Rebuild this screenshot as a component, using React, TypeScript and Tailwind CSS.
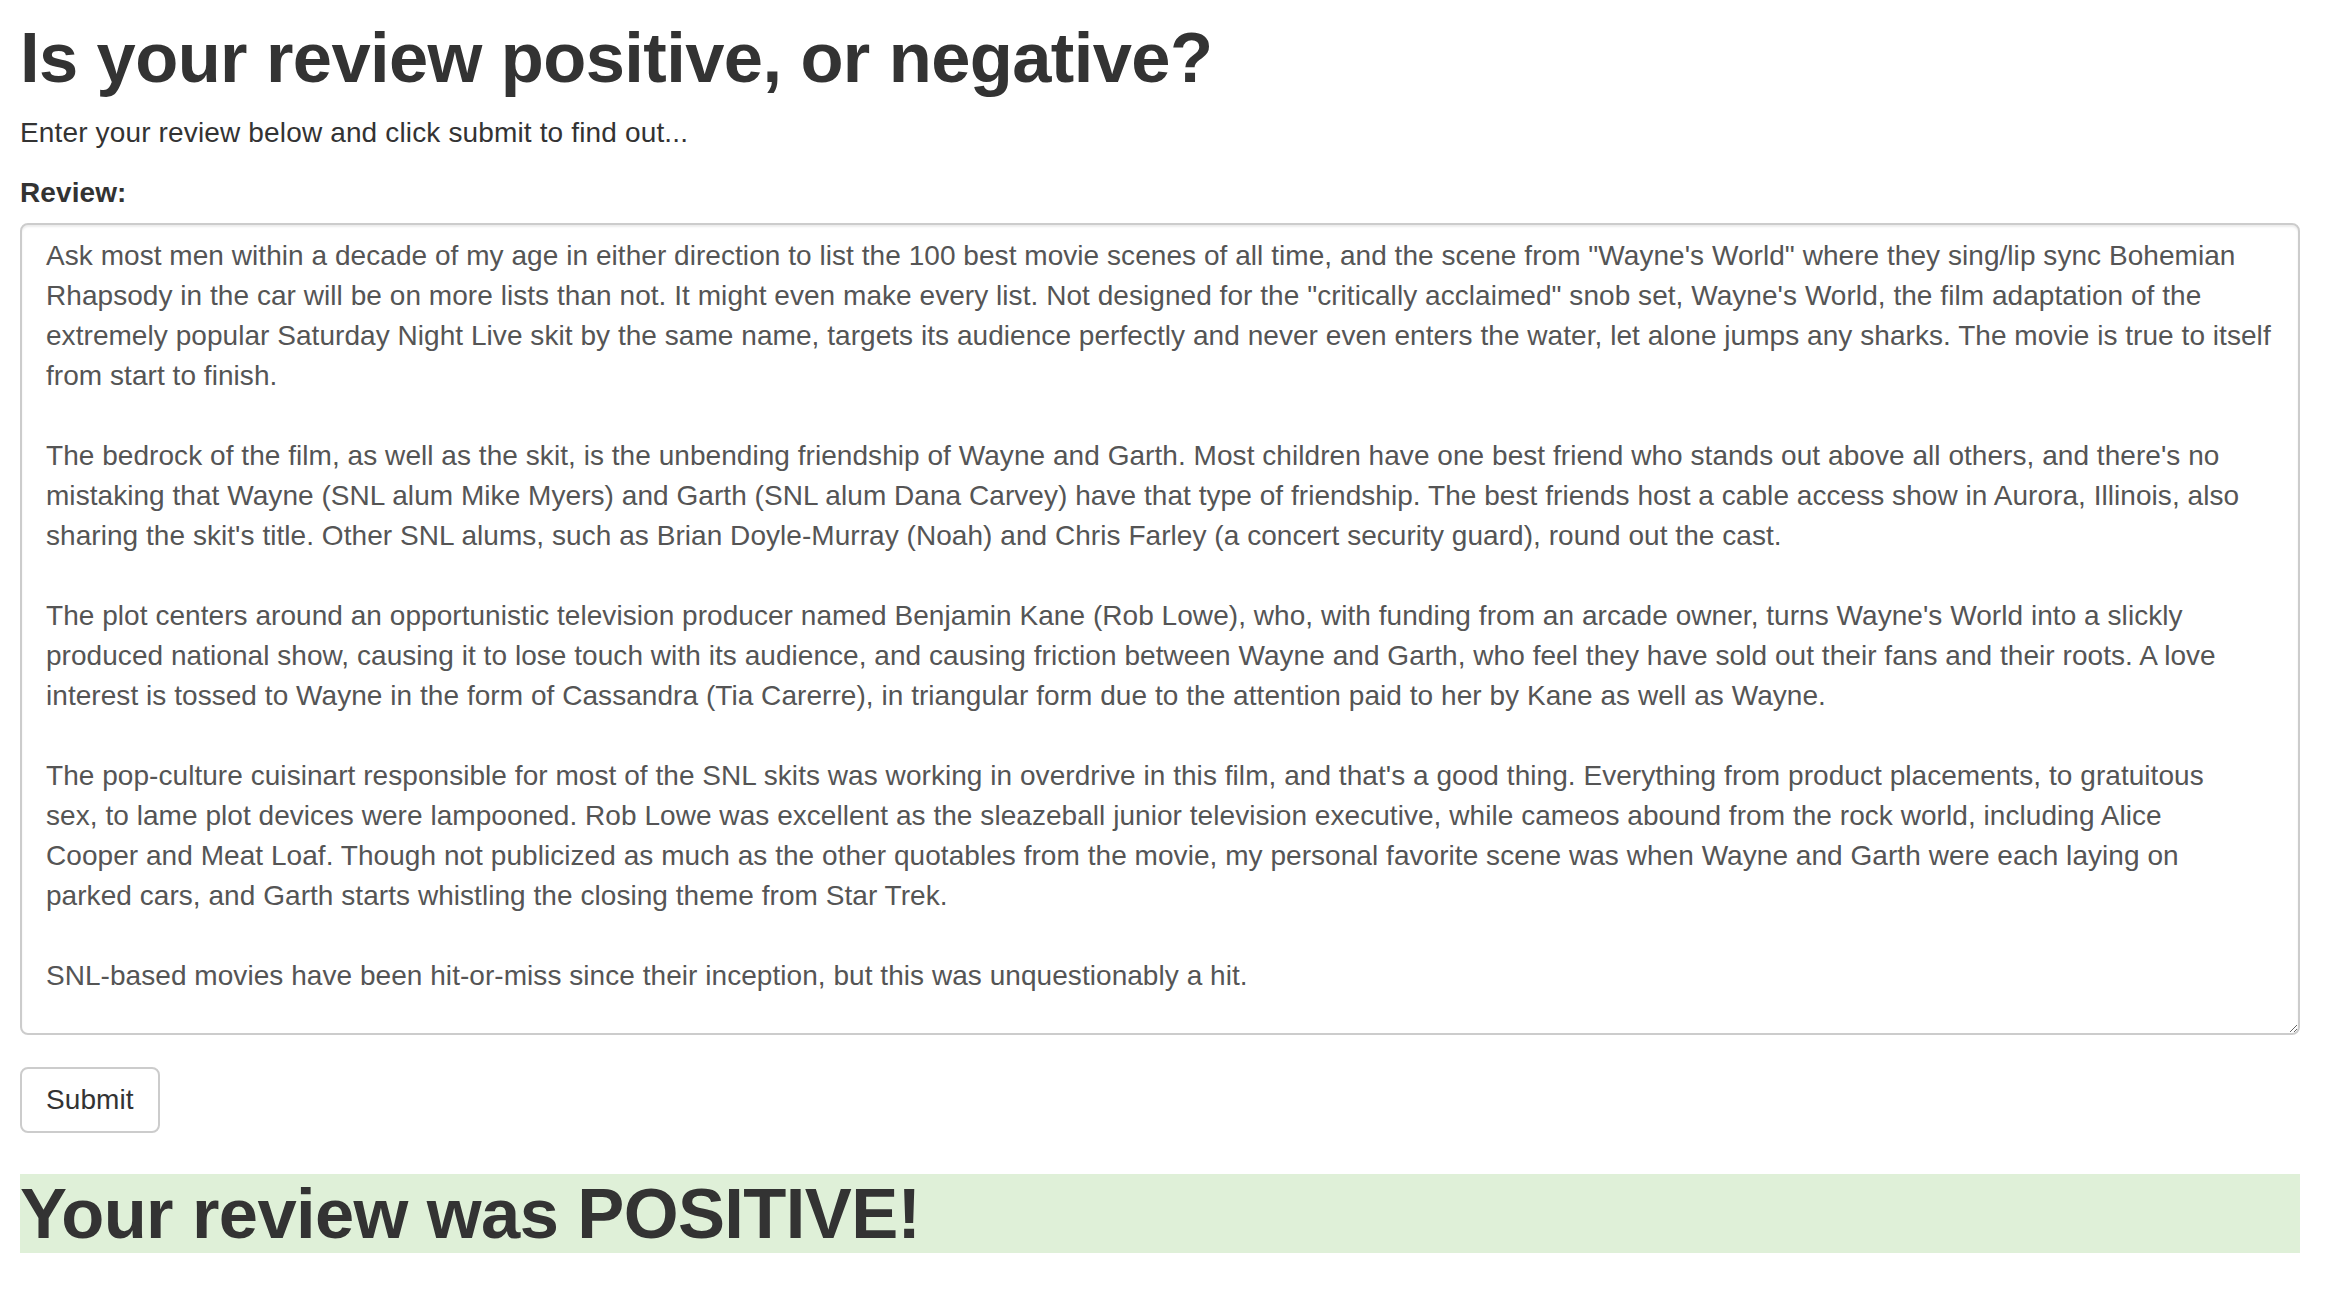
import React from 'react';

const review = [
  'Ask most men within a decade of my age in either direction to list the 100 best movie scenes of all time, and the scene from "Wayne\'s World" where they sing/lip sync Bohemian',
  'Rhapsody in the car will be on more lists than not. It might even make every list. Not designed for the "critically acclaimed" snob set, Wayne\'s World, the film adaptation of the',
  'extremely popular Saturday Night Live skit by the same name, targets its audience perfectly and never even enters the water, let alone jumps any sharks. The movie is true to itself',
  'from start to finish.',
  '',
  "The bedrock of the film, as well as the skit, is the unbending friendship of Wayne and Garth. Most children have one best friend who stands out above all others, and there's no",
  'mistaking that Wayne (SNL alum Mike Myers) and Garth (SNL alum Dana Carvey) have that type of friendship. The best friends host a cable access show in Aurora, Illinois, also',
  "sharing the skit's title. Other SNL alums, such as Brian Doyle-Murray (Noah) and Chris Farley (a concert security guard), round out the cast.",
  '',
  "The plot centers around an opportunistic television producer named Benjamin Kane (Rob Lowe), who, with funding from an arcade owner, turns Wayne's World into a slickly",
  'produced national show, causing it to lose touch with its audience, and causing friction between Wayne and Garth, who feel they have sold out their fans and their roots. A love',
  'interest is tossed to Wayne in the form of Cassandra (Tia Carerre), in triangular form due to the attention paid to her by Kane as well as Wayne.',
  '',
  "The pop-culture cuisinart responsible for most of the SNL skits was working in overdrive in this film, and that's a good thing. Everything from product placements, to gratuitous",
  'sex, to lame plot devices were lampooned. Rob Lowe was excellent as the sleazeball junior television executive, while cameos abound from the rock world, including Alice',
  'Cooper and Meat Loaf. Though not publicized as much as the other quotables from the movie, my personal favorite scene was when Wayne and Garth were each laying on',
  'parked cars, and Garth starts whistling the closing theme from Star Trek.',
  '',
  'SNL-based movies have been hit-or-miss since their inception, but this was unquestionably a hit.',
].join('\n');

const App = () => {
  return (
    <div className="min-h-screen bg-white pl-[20px] pr-[34px] pt-[17.5px] font-['Liberation_Sans',Arial,sans-serif] text-[#333]">
      {/* Heading */}
      <h1 className="text-[70.5px] leading-[79px] font-bold tracking-[-0.6px]">
        Is your review positive, or negative?
      </h1>
      <p className="mt-[16px] text-[28px] leading-[40px] tracking-[0.15px]">
        Enter your review below and click submit to find out...
      </p>

      <form onSubmit={(e) => e.preventDefault()}>
        <label htmlFor="review" className="mt-[20px] block text-[28px] leading-[40px] font-bold tracking-[0.1px]">
          Review:
        </label>
        <textarea
          id="review"
          defaultValue={review}
          wrap="off"
          className="mt-[10px] block h-[812px] w-full overflow-hidden whitespace-pre rounded-[8px] border-2 border-[#ccc] bg-white px-[24px] py-[11px] text-[28px] leading-[40px] tracking-[0.05px] text-[#555] shadow-[inset_0_2px_2px_rgba(0,0,0,0.075)] outline-none"
        />

        <button
          type="submit"
          className="mt-[32px] h-[66px] rounded-[8px] border-2 border-[#ccc] bg-white px-[24px] text-[28px] leading-[40px] tracking-[0.1px] text-[#333]"
        >
          Submit
        </button>
      </form>

      {/* Result */}
      <h1 className="mt-[41px] bg-[#dff0d8] text-[70.5px] leading-[79px] font-bold tracking-[-0.6px]">
        Your review was POSITIVE!
      </h1>
    </div>
  );
};

export default App;
